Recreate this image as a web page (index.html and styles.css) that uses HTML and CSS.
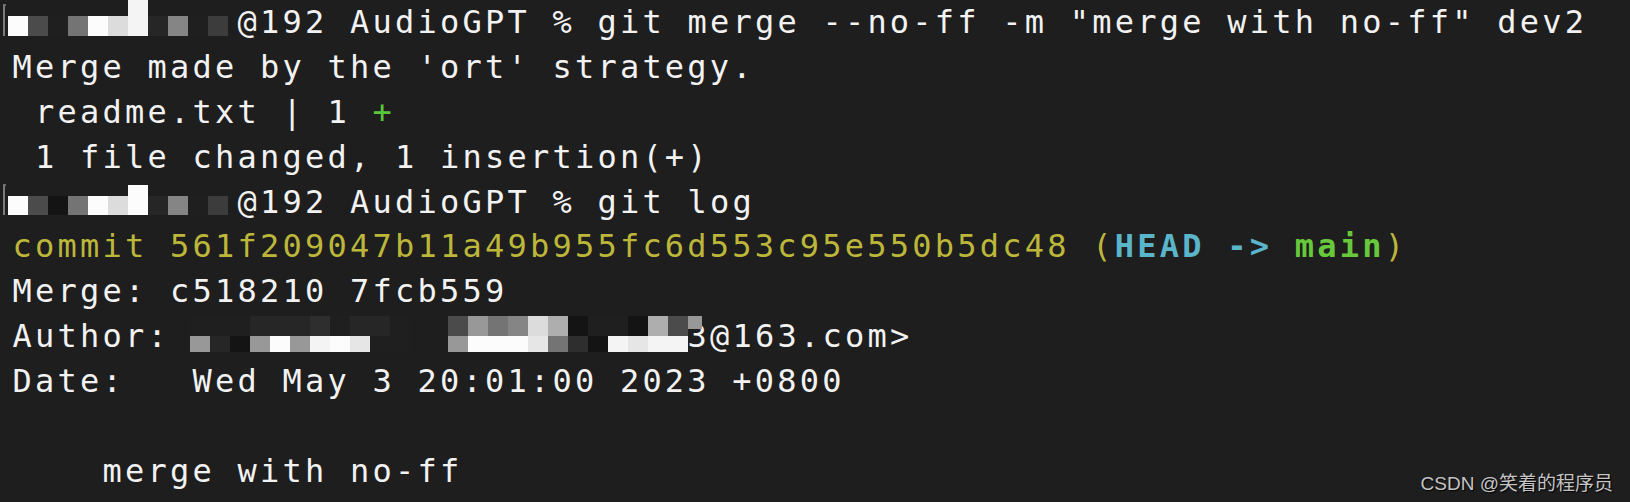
FILE: index.html
```html
<!DOCTYPE html>
<html lang="en">
<head>
<meta charset="utf-8">
<title>Terminal - git merge --no-ff</title>
<link rel="stylesheet" href="styles.css">
</head>
<body>
<main class="term">
  <div class="ln"><span class="mosaic p1"><i class="brk"></i><i class="c kd"></i><i class="c k5"></i><i class="c k1"></i><i class="c k6"></i><i class="c kd"></i><i class="c ka"></i><i class="c kc tall"></i><i class="c k2"></i><i class="c k7"></i><i class="c k1"></i><i class="c k4"></i></span>@192 AudioGPT % git merge --no-ff -m "merge with no-ff" dev2</div>
  <div class="ln">Merge made by the 'ort' strategy.</div>
  <div class="ln"> readme.txt | 1 <span class="add">+</span></div>
  <div class="ln"> 1 file changed, 1 insertion(+)</div>
  <div class="ln"><span class="mosaic p2"><i class="brk"></i><i class="c kd"></i><i class="c k5"></i><i class="c k0"></i><i class="c k6"></i><i class="c kd"></i><i class="c ka"></i><i class="c kd tall"></i><i class="c k2"></i><i class="c k7"></i><i class="c k1"></i><i class="c k4"></i></span>@192 AudioGPT % git log</div>
  <div class="ln"><span class="yel">commit 561f209047b11a49b955fc6d553c95e550b5dc48 (</span><span class="cy">HEAD -&gt; </span><span class="gr">main</span><span class="yel">)</span></div>
  <div class="ln">Merge: c518210 7fcb559</div>
  <div class="ln">Author: <span class="mosaic mail"><span class="grp"><span class="col"><i class="t k1"></i><i class="b k8"></i></span><span class="col"><i class="t k1"></i><i class="b k2"></i></span><span class="col"><i class="t k1"></i><i class="b k0"></i></span><span class="col"><i class="t k2"></i><i class="b k8"></i></span><span class="col"><i class="t k2"></i><i class="b kd"></i></span><span class="col"><i class="t k2"></i><i class="b k8"></i></span><span class="col"><i class="t k3"></i><i class="b kc"></i></span><span class="col"><i class="t k1"></i><i class="b kd"></i></span><span class="col"><i class="t k2"></i><i class="b kb"></i></span><span class="col"><i class="t k2"></i><i class="b k1"></i></span><span class="col"><i class="t k1"></i><i class="b k1"></i></span></span><span class="grp g2"><span class="col"><i class="t k5"></i><i class="b k8"></i></span><span class="col"><i class="t k8"></i><i class="b kd"></i></span><span class="col"><i class="t k6"></i><i class="b kd"></i></span><span class="col"><i class="t k7"></i><i class="b kd"></i></span><span class="col"><i class="t ka"></i><i class="b kb"></i></span><span class="col"><i class="t k9"></i><i class="b k6"></i></span><span class="col"><i class="t k0"></i><i class="b k3"></i></span><span class="col"><i class="t k1"></i><i class="b k0"></i></span><span class="col"><i class="t k1"></i><i class="b kc"></i></span><span class="col"><i class="t k0"></i><i class="b kb"></i></span><span class="col"><i class="t k9"></i><i class="b kc"></i></span><span class="col"><i class="t k5"></i><i class="b kc"></i></span><span class="col edge"><i class="t k8"></i></span></span></span>3@163.com&gt;</div>
  <div class="ln">Date:   Wed May 3 20:01:00 2023 +0800</div>
  <div class="ln"> </div>
  <div class="ln">    merge with no-ff</div>
</main>
<div class="watermark">CSDN @笑着的程序员</div>
</body>
</html>
```

FILE: styles.css
```css
html, body {
  margin: 0;
  padding: 0;
  background: #1e1e1e;
  height: 100%;
  overflow: hidden;
}

.term {
  padding: 0 0 0 12.5px;
  font-family: "DejaVu Sans Mono", "Liberation Mono", monospace;
  font-size: 32px;
  letter-spacing: 3.23px;
  line-height: 44.9px;
  color: #f2f2f2;
}

.ln {
  white-space: pre;
  height: 44.9px;
}

.add { color: #5cc63a; }
.yel { color: #bcb73a; }
.cy { color: #5bb5ca; font-weight: bold; }
.gr { color: #68c83c; font-weight: bold; }

/* pixelated redaction blocks */
.mosaic {
  display: inline-flex;
  vertical-align: top;
  letter-spacing: 0;
}

.mosaic i { display: block; font-style: normal; }

.mosaic.p1 {
  align-items: flex-end;
  margin-left: -9.5px;
  width: 234.5px;
  height: 36px;
}

.mosaic.p2 {
  align-items: flex-end;
  margin-left: -9.5px;
  width: 234.5px;
  height: 35.4px;
}

.brk {
  width: 3px;
  margin-right: 2px;
  border-left: 2px solid #7a7a7a;
  border-top: 2px solid #6a6a6a;
  box-sizing: border-box;
  flex: none;
}

.p1 .brk { height: 32px; }
.p2 .brk { height: 31px; }

.p1 .c { width: 20px; height: 20px; flex: none; }
.p1 .c.tall { height: 36px; }
.p2 .c { width: 20px; height: 19px; flex: none; }
.p2 .c.tall { height: 30px; }

.mosaic.mail {
  position: relative;
  z-index: 1;
  margin-left: -2.5px;
  width: 497.5px;
  margin-top: 1.7px;
}

.grp { display: flex; flex: none; }
.grp.g2 { margin-left: 38px; }
.col { display: flex; flex-direction: column; width: 20px; flex: none; }
.col .t { height: 20px; }
.col .b { height: 16px; }
.col.edge { width: 14px; }
.col.edge .t { height: 13px; }

.k0 { background: #141414; }
.k1 { background: #1f1f1f; }
.k2 { background: #262626; }
.k3 { background: #2e2e2e; }
.k4 { background: #3c3c3c; }
.k5 { background: #4b4b4b; }
.k6 { background: #747474; }
.k7 { background: #858585; }
.k8 { background: #989898; }
.k9 { background: #aeaeae; }
.ka { background: #dcdcdc; }
.kb { background: #e6e6e6; }
.kc { background: #f4f4f4; }
.kd { background: #fcfcfc; }

.watermark {
  position: absolute;
  right: 17px;
  bottom: 7px;
  font-family: "Liberation Sans", "Noto Sans CJK SC", sans-serif;
  font-size: 19px;
  line-height: 22px;
  color: #c4c4c4;
  text-shadow: 1px 1px 1px #000;
}
```
